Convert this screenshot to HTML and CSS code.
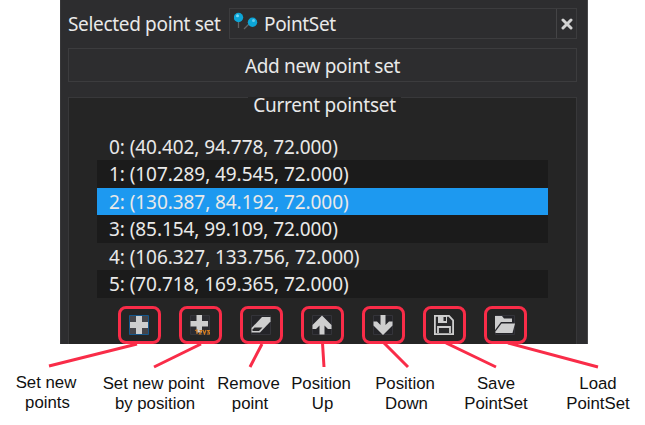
FILE: index.html
```html
<!DOCTYPE html>
<html lang="en">
<head>
<meta charset="utf-8">
<title>Point sets</title>
<link rel="stylesheet" href="styles.css">
</head>
<body>
<main class="panel">
  <div class="selector">
    <span class="selector-label">Selected point set</span>
    <div class="field">
      <svg class="pins" width="27" height="22" viewBox="0 0 27 22">
        <path d="M4.5 9v7" stroke="#626466" stroke-width="1.3"/>
        <path d="M16 11l-6 6" stroke="#626466" stroke-width="1.3"/>
        <circle cx="4.5" cy="5.5" r="4.7" fill="#0ca5d7"/>
        <circle cx="18.500" cy="10.300" r="4.700" fill="#0ca5d7"/>
        <circle cx="3.5" cy="3.7" r="1.5" fill="#7bd6f2"/>
        <circle cx="19.5" cy="8.6" r="1.5" fill="#62cbed"/>
      </svg>
      <span class="field-value">PointSet</span>
      <span class="clear"><svg width="12" height="12" viewBox="0 0 12 12"><path d="M2 2l8 8M10 2l-8 8" stroke="#d2d2d2" stroke-width="3" stroke-linecap="round"/></svg></span>
    </div>
  </div>
  <div class="add">Add new point set</div>
  <section class="group">
    <h2 class="legend"><span>Current pointset</span></h2>
    <ul class="points">
      <li>0: (40.402, 94.778, 72.000)</li>
      <li>1: (107.289, 49.545, 72.000)</li>
      <li class="selected">2: (130.387, 84.192, 72.000)</li>
      <li>3: (85.154, 99.109, 72.000)</li>
      <li>4: (106.327, 133.756, 72.000)</li>
      <li>5: (70.718, 169.365, 72.000)</li>
    </ul>
    <div class="tools">
      <span class="tool"><svg viewBox="0 0 20 20"><path d="M.5.5h19v19H.5z" fill="#45454a" stroke="#15578c"/><path d="M7 1v6H1v6h6v6h6v-6h6V7h-6V1z" fill="#cecece"/></svg></span>
      <span class="tool"><svg viewBox="0 0 20 20"><path d="M.5.5h19v19H.5z" fill="#2b2b30" stroke="#35353b"/><path d="M6.500 0v6H.5v5.500h6v6h5.500v-6h6V6h-6V0z" fill="#cecece"/><path d="M5 15.500l2-.5v4M9.500 15.500h2l-2 3.500h2M13 15l1.500 4 1.500-4M17 15.500h2.500l-1.500 1.500 1.500.5v1.500H17" fill="none" stroke="#d17b20" stroke-width="1.200"/></svg></span>
      <span class="tool"><svg viewBox="0 0 20 20"><path d="M.5.5h19v19H.5z" fill="#242428" stroke="#34343a"/><path d="M11 2h8.500v4.500L9 17.500H.5V13z" fill="#cecece"/><path d="M3.500 12.500h8L8 16H1.500v-1.500z" fill="#29292b"/></svg></span>
      <span class="tool"><svg viewBox="0 0 20 20"><path d="M.5.5h19v19H.5z" fill="#242428" stroke="#34343a"/><path d="M7.500 19.500V10.500l-3.500 3.500H.5v-4L10 .5l9.500 9.500v4H16l-3.500-3.500v9z" fill="#cecece"/></svg></span>
      <span class="tool"><svg viewBox="0 0 20 20"><path d="M.5.5h19v19H.5z" fill="#242428" stroke="#34343a"/><path d="M7.500 0v10L4 6.500H.5v4L10 20l9.500-9.500v-4H16L12.500 10V0z" fill="#cecece"/></svg></span>
      <span class="tool"><svg viewBox="0 0 20 20"><path d="M.9.9H15l4.100 4.500v13.700H.9z" fill="#29292b" stroke="#cecece" stroke-width="1.800"/><path d="M4 1h9v7H4z" fill="#cecece"/><path d="M9.500 2h2.500v4H9.500z" fill="#29292b"/><path d="M4 18v-6h12v6" fill="none" stroke="#cecece" stroke-width="1.800"/></svg></span>
      <span class="tool"><svg viewBox="0 0 20 20"><path d="M.5.5h19v19H.5z" fill="#242428" stroke="#34343a"/><path d="M0 1h7l2 2.500h8V7H6l-6 8z" fill="#cecece"/><path d="M6.500 8.500H20L17.500 18H.5v-1.500z" fill="#cecece"/></svg></span>
    </div>
  </section>
</main>
<svg class="leaders" width="645" height="28" viewBox="0 0 645 28">
  <path d="M137 1L49 23M201 1L154 24M262 1L250 24M322.500 0L324 24M384 0L408 24M446 0L496 24M508 0L598 24"/>
</svg>
<div class="captions">
  <p class="raised">Set new<span>points</span></p>
  <p>Set new point<span>by position</span></p>
  <p>Remove<span>point</span></p>
  <p>Position<span>Up</span></p>
  <p>Position<span>Down</span></p>
  <p class="centered">Save<span>PointSet</span></p>
  <p class="last centered">Load<span>PointSet</span></p>
</div>
</body>
</html>
```
FILE: styles.css
```css
* { box-sizing: border-box; }
body {
  margin: 0;
  width: 645px;
  height: 425px;
  overflow: hidden;
  background: #fff;
  font-family: "Noto Sans", sans-serif;
}
.panel {
  width: 528px;
  height: 344px;
  margin-left: 60px;
  padding: 8px 10px 0 8px;
  background: #2d2d2f;
  border-right: 1px solid #48484a;
  border-left: 1px solid #38383a;
  color: #e9e9e9;
  font-size: 19px;
  letter-spacing: -0.330px;
}
.selector {
  display: flex;
  align-items: center;
  justify-content: space-between;
  height: 31px;
}
.selector-label { margin-left: -1px; padding-top: 2px; white-space: nowrap; line-height: 31px; }
.field {
  display: flex;
  align-items: center;
  width: 348px;
  height: 31px;
  border: 1px solid #3c3c3e;
}
.pins { margin: -2px 0 0 4px; }
.field-value { margin-left: 3px; padding-top: 2px; line-height: 29px; }
.clear {
  display: flex;
  align-items: center;
  justify-content: center;
  width: 20px;
  height: 29px;
  margin-left: auto;
  border-left: 1px solid #444446;
}
.add {
  height: 34px;
  margin: 9px 0 15px -1px;
  border: 1px solid #3c3c3e;
  line-height: 35px;
  text-align: center;
}
.group {
  height: 247px;
  margin-left: -1px;
  padding: 0 28px;
  border: 1px solid #38383a;
  border-bottom: 0;
  background: #252525;
}
.legend {
  height: 35.500px;
  margin: -1px 0 0;
  padding-left: 4px;
  font-size: 19px;
  font-weight: 400;
  letter-spacing: -0.250px;
  line-height: 17px;
  text-align: center;
}
.legend span { display: inline-block; padding: 0 5px; background: #252525; }
.points { margin: 0; padding: 0; list-style: none; letter-spacing: -0.070px; }
.points li { height: 27.500px; padding-left: 12px; line-height: 29px; white-space: nowrap; }
.points li:nth-child(even) { background: #1b1b1b; }
.points .selected { background: #1d99f0; }
.tools { display: flex; gap: 18px; margin: 8.500px 0 0 21px; }
.tool {
  display: flex;
  flex: none;
  align-items: center;
  justify-content: center;
  width: 43px;
  height: 38px;
  border: 3px solid #f92c48;
  border-radius: 8px;
}
.tool svg { width: 20px; height: 20px; margin-left: -1px; }
.leaders { display: block; margin-top: -1px; }
.leaders path { fill: none; stroke: #f92c48; stroke-width: 3; }
.captions {
  display: grid;
  grid-template-columns: 92px 123px 67px 78px 90px 92px 103px;
  margin-top: 3px;
  color: #111;
  font-family: "Liberation Sans", sans-serif;
  font-size: 16.800px;
  line-height: 20px;
  text-align: center;
  white-space: nowrap;
}
.captions p { margin: 0; }
.captions span { display: block; padding-left: 3px; }
.captions .raised { margin-top: -1px; }
.captions .centered span { padding-left: 0; }
.captions .last { padding-left: 9px; }
```
